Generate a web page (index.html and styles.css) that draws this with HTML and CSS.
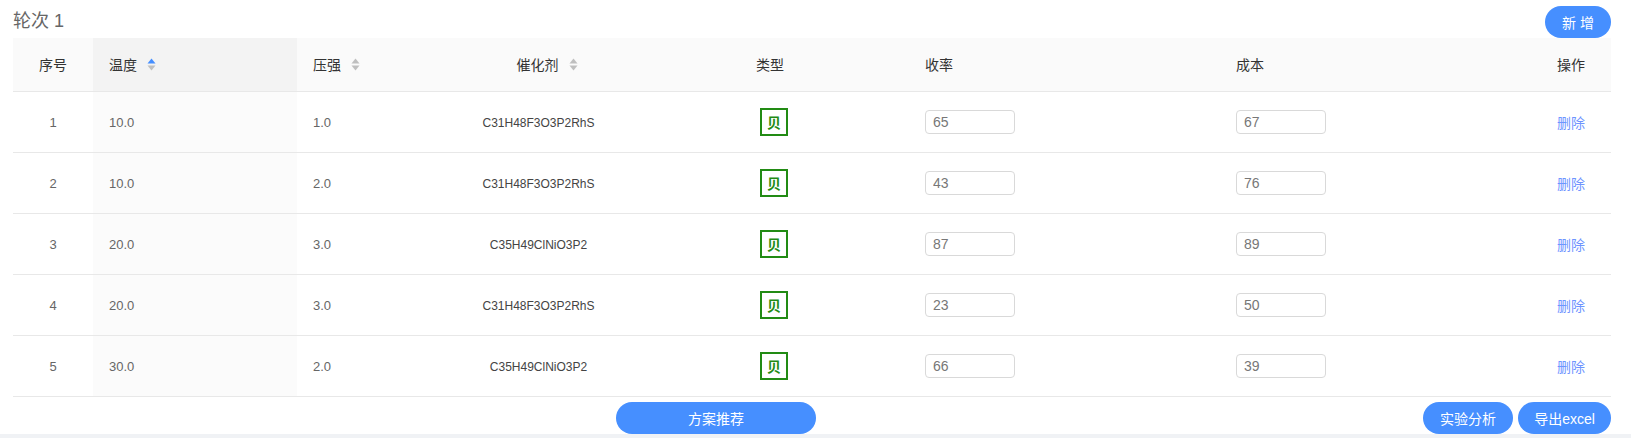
FILE: index.html
```html
<!DOCTYPE html>
<html lang="zh-CN">
<head>
<meta charset="utf-8">
<title>轮次 1</title>
<link rel="stylesheet" href="styles.css">
</head>
<body>
<main class="panel">
  <header class="title-row">
    <h2 class="title">轮次 1</h2>
    <button class="btn btn-add">新 增</button>
  </header>
  <table class="grid">
    <colgroup>
      <col class="c-no"><col class="c-temp"><col class="c-press"><col class="c-cat"><col class="c-type"><col class="c-yield"><col class="c-cost"><col class="c-op">
    </colgroup>
    <thead>
      <tr>
        <th class="center">序号</th>
        <th class="sorted"><span class="th-in">温度<svg class="sort" width="9" height="13" viewBox="0 0 9 13"><path class="up on" d="M4.5 0.5 8.5 5.5H0.5Z"/><path class="down" d="M0.5 7.5H8.5L4.5 12.5Z"/></svg></span></th>
        <th><span class="th-in">压强<svg class="sort" width="9" height="13" viewBox="0 0 9 13"><path class="up" d="M4.5 0.5 8.5 5.5H0.5Z"/><path class="down" d="M0.5 7.5H8.5L4.5 12.5Z"/></svg></span></th>
        <th class="center th-cat"><span class="th-in">催化剂<svg class="sort" width="9" height="13" viewBox="0 0 9 13"><path class="up" d="M4.5 0.5 8.5 5.5H0.5Z"/><path class="down" d="M0.5 7.5H8.5L4.5 12.5Z"/></svg></span></th>
        <th class="center">类型</th>
        <th>收率</th>
        <th>成本</th>
        <th>操作</th>
      </tr>
    </thead>
    <tbody>
      <tr><td class="center val">1</td><td class="sorted val">10.0</td><td class="val">1.0</td><td class="center cat val">C31H48F3O3P2RhS</td><td class="center td-type"><span class="tag">贝</span></td><td><input class="num" value="65"></td><td><input class="num" value="67"></td><td><a class="del">删除</a></td></tr>
      <tr><td class="center val">2</td><td class="sorted val">10.0</td><td class="val">2.0</td><td class="center cat val">C31H48F3O3P2RhS</td><td class="center td-type"><span class="tag">贝</span></td><td><input class="num" value="43"></td><td><input class="num" value="76"></td><td><a class="del">删除</a></td></tr>
      <tr><td class="center val">3</td><td class="sorted val">20.0</td><td class="val">3.0</td><td class="center cat val">C35H49ClNiO3P2</td><td class="center td-type"><span class="tag">贝</span></td><td><input class="num" value="87"></td><td><input class="num" value="89"></td><td><a class="del">删除</a></td></tr>
      <tr><td class="center val">4</td><td class="sorted val">20.0</td><td class="val">3.0</td><td class="center cat val">C31H48F3O3P2RhS</td><td class="center td-type"><span class="tag">贝</span></td><td><input class="num" value="23"></td><td><input class="num" value="50"></td><td><a class="del">删除</a></td></tr>
      <tr><td class="center val">5</td><td class="sorted val">30.0</td><td class="val">2.0</td><td class="center cat val">C35H49ClNiO3P2</td><td class="center td-type"><span class="tag">贝</span></td><td><input class="num" value="66"></td><td><input class="num" value="39"></td><td><a class="del">删除</a></td></tr>
    </tbody>
  </table>
  <footer class="actions">
    <div class="act-left"></div>
    <button class="btn btn-rec">方案推荐</button>
    <div class="act-right">
      <button class="btn btn-an">实验分析</button>
      <button class="btn btn-ex">导出excel</button>
    </div>
  </footer>
</main>
</body>
</html>
```
FILE: styles.css
```css
* { box-sizing: border-box; }
html, body { margin: 0; padding: 0; }
body {
  background: #f0f2f5;
  font-family: "Liberation Sans", "Noto Sans CJK SC", sans-serif;
  font-size: 13px;
  color: #666;
  overflow: hidden;
}
.panel {
  background: #fff;
  height: 434px;
  padding: 6px 20px 0 13px;
}
.title-row {
  display: flex;
  justify-content: space-between;
  align-items: flex-start;
  height: 32px;
}
.title {
  margin: 0;
  font-size: 18px;
  font-weight: 400;
  line-height: 30px;
  color: #666;
}
.btn {
  border: 0;
  border-radius: 16px;
  height: 32px;
  background: #468fff;
  color: #fff;
  font-family: inherit;
  font-size: 14px;
  padding: 0;
}
.btn-add { width: 66px; }
.grid {
  width: 1598px;
  border-collapse: collapse;
  table-layout: fixed;
}
.c-no { width: 80px; }
.c-temp { width: 204px; }
.c-press { width: 149px; }
.c-cat { width: 185px; }
.c-type { width: 278px; }
.c-yield { width: 311px; }
.c-cost { width: 321px; }
.c-op { width: 70px; }
.grid th {
  height: 53px;
  padding: 0 16px;
  background: #fafafa;
  border-bottom: 1px solid #e8e8e8;
  color: #333;
  font-weight: 400;
  font-size: 14px;
  text-align: left;
}
.grid td {
  height: 61px;
  padding: 0 16px;
  border-bottom: 1px solid #e8e8e8;
  text-align: left;
  color: #666;
}
.grid td.val { padding-top: 2px; }
.grid th.sorted { background: #f3f3f3; }
.grid td.sorted { background: #fbfbfb; }
.grid th.center, .grid td.center { text-align: center; }
.grid th.th-cat { padding-left: 33px; }
.grid td.td-type { padding-left: 24px; }
.th-in { display: inline-flex; align-items: center; gap: 10px; }
.sort .up, .sort .down { fill: #bfbfbf; }
.sort .up.on { fill: #468fff; }
.grid td.cat { font-size: 12px; color: #444; white-space: nowrap; }
.tag {
  display: inline-flex;
  align-items: center;
  justify-content: center;
  width: 28px;
  height: 28px;
  border: 2px solid #228b14;
  color: #228b14;
  font-family: "Noto Sans CJK SC", sans-serif;
  font-weight: 700;
  font-size: 14px;
  vertical-align: middle;
}
.num {
  display: block;
  width: 90px;
  height: 24px;
  border: 1px solid #d9d9d9;
  border-radius: 4px;
  padding: 0 7px;
  font-family: inherit;
  font-size: 14px;
  color: #777;
  outline: none;
}
.del { color: #6e94ff; font-size: 14px; }
.actions {
  display: grid;
  grid-template-columns: 603px 200px 1fr;
  padding-top: 5px;
}
.btn-rec { width: 200px; }
.act-right { display: flex; justify-content: flex-end; gap: 5px; }
.btn-an { width: 90px; }
.btn-ex { width: 93px; }
```
